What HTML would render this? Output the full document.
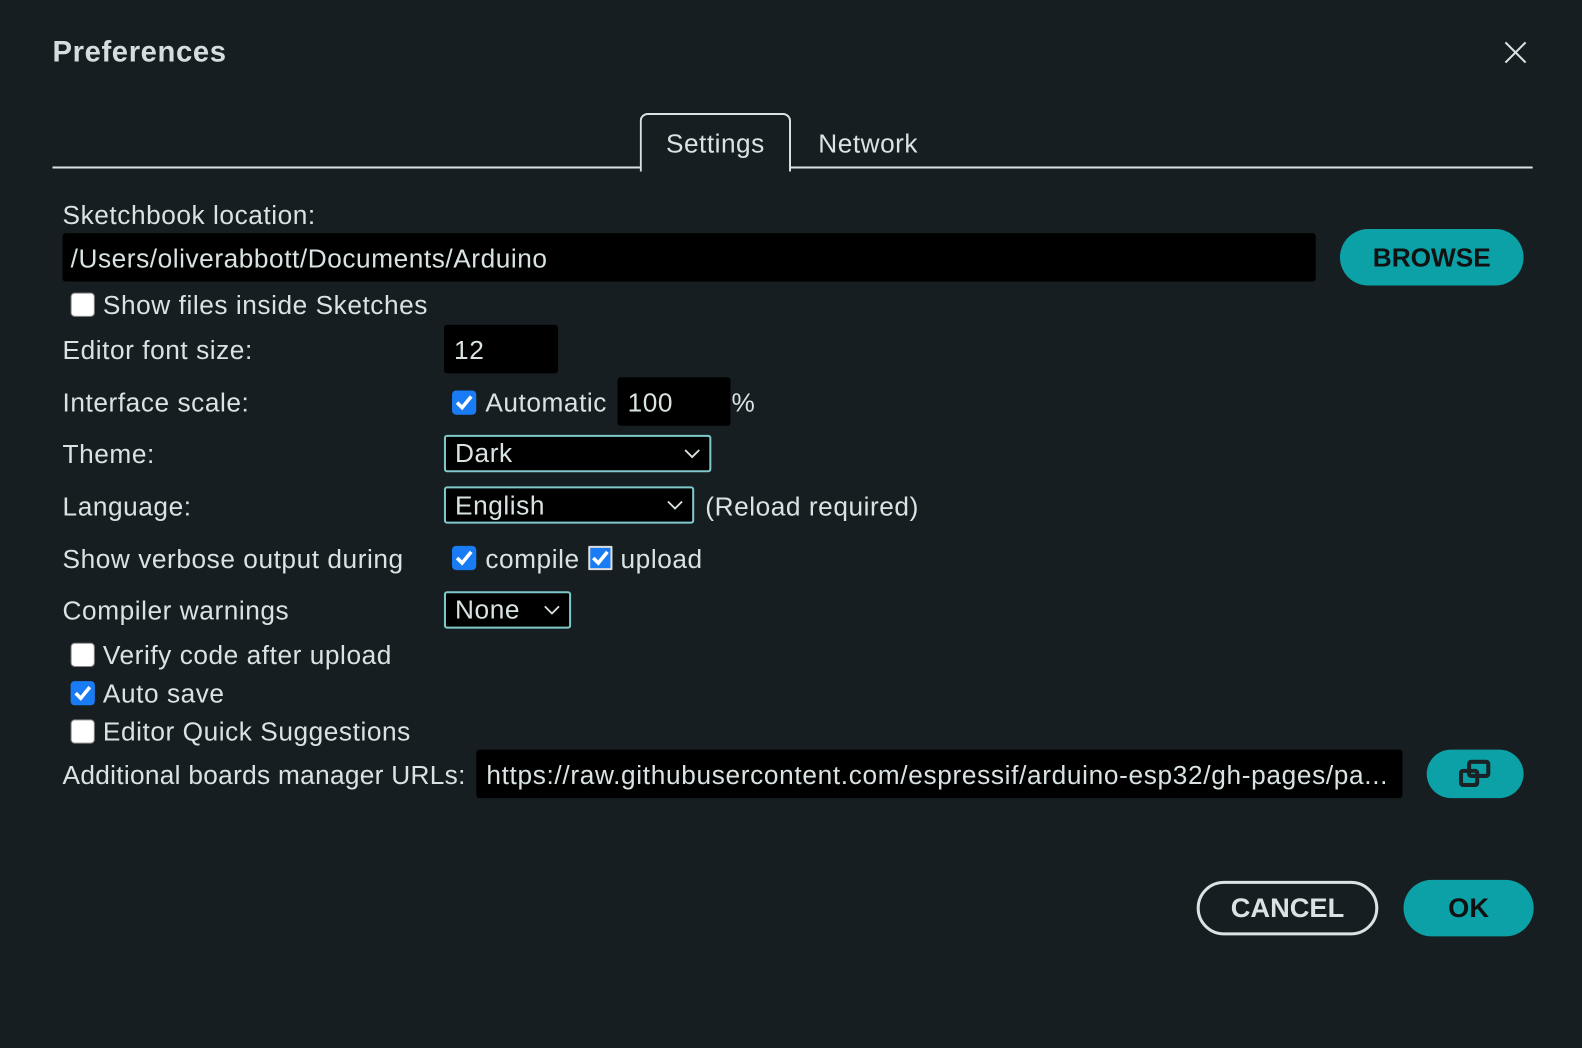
<!DOCTYPE html>
<html><head><style>
body{margin:0;width:1582px;height:1048px;background:#171e21;font-family:"Liberation Sans",sans-serif;color:#dae3e3;overflow:hidden}
#w{position:absolute;left:0;top:0;width:1568px;height:1039px;transform:scale(1.009);transform-origin:0 0}
.a{position:absolute;white-space:nowrap}
.t{font-size:26px;line-height:28px;letter-spacing:0.55px}
.in{position:absolute;background:#000;border-radius:3px}
.sel{position:absolute;background:#000;border:2px solid #7fc9cc;border-radius:3px;box-sizing:border-box}
.sel svg{position:absolute;right:8px;top:10px}
.cb{position:absolute;width:24px;height:24px;border-radius:4px;box-sizing:border-box}
.off{background:#fff;border:1px solid #888}
.on{background:#1a7cf5}
.btn{position:absolute;border-radius:30px;font-weight:bold;text-align:center}
</style></head><body><div id="w">
<div class="a" style="left:52px;top:34px;font-size:29px;line-height:36px;font-weight:bold;letter-spacing:0.6px;color:#d5dede">Preferences</div>
<svg class="a" style="left:1490px;top:40px" width="24" height="24"><path d="M2 2L22 22M22 2L2 22" stroke="#dae3e3" stroke-width="2"/></svg>
<div class="a" style="left:52px;top:165px;width:1467px;height:2px;background:#dae3e3"></div>
<div class="a" style="left:634px;top:112px;width:146px;height:56px;border:2px solid #dae3e3;border-bottom:none;border-radius:8px 8px 0 0;background:#171e21"></div>
<div class="a t" style="left:660px;top:128px;font-size:26px;letter-spacing:0.5px">Settings</div>
<div class="a t" style="left:811px;top:128px;font-size:26px;letter-spacing:0.5px">Network</div>

<div class="a t" style="left:62px;top:199px">Sketchbook location:</div>
<div class="in" style="left:62px;top:231px;width:1242px;height:48px"></div>
<div class="a t" style="left:70px;top:242px">/Users/oliverabbott/Documents/Arduino</div>
<div class="btn" style="left:1328px;top:227px;width:182px;height:56px;background:#0ca1a6;color:#111;font-size:26px;line-height:56px">BROWSE</div>

<div class="cb off" style="left:70px;top:290px"></div>
<div class="a t" style="left:102px;top:288px">Show files inside Sketches</div>

<div class="a t" style="left:62px;top:333px">Editor font size:</div>
<div class="in" style="left:440px;top:322px;width:113px;height:48px"></div>
<div class="a t" style="left:450px;top:333px">12</div>

<div class="a t" style="left:62px;top:385px">Interface scale:</div>
<div class="cb on" style="left:448px;top:387px"><svg width="24" height="24"><path d="M5 12l5 5 9-11" stroke="#fff" stroke-width="3.5" fill="none"/></svg></div>
<div class="a t" style="left:481px;top:385px">Automatic</div>
<div class="in" style="left:612px;top:374px;width:112px;height:48px"></div>
<div class="a t" style="left:622px;top:385px">100</div>
<div class="a t" style="left:725px;top:385px">%</div>

<div class="a t" style="left:62px;top:436px">Theme:</div>
<div class="sel" style="left:440px;top:431px;width:265px;height:37px"><svg width="18" height="12"><path d="M2 3l7 7 7-7" stroke="#dae3e3" stroke-width="1.8" fill="none"/></svg></div>
<div class="a t" style="left:451px;top:435px">Dark</div>

<div class="a t" style="left:62px;top:488px">Language:</div>
<div class="sel" style="left:440px;top:482px;width:248px;height:37px"><svg width="18" height="12"><path d="M2 3l7 7 7-7" stroke="#dae3e3" stroke-width="1.8" fill="none"/></svg></div>
<div class="a t" style="left:451px;top:487px">English</div>
<div class="a t" style="left:699px;top:488px">(Reload required)</div>

<div class="a t" style="left:62px;top:540px">Show verbose output during</div>
<div class="cb on" style="left:448px;top:541px"><svg width="24" height="24"><path d="M5 12l5 5 9-11" stroke="#fff" stroke-width="3.5" fill="none"/></svg></div>
<div class="a t" style="left:481px;top:540px">compile</div>
<div class="cb on" style="left:583px;top:541px;border:2px solid #ddd;border-radius:1px"><svg width="22" height="22" style="position:absolute;left:-1px;top:-1px"><path d="M4 11l5 5 9-11" stroke="#fff" stroke-width="3.5" fill="none"/></svg></div>
<div class="a t" style="left:615px;top:540px">upload</div>

<div class="a t" style="left:62px;top:591px">Compiler warnings</div>
<div class="sel" style="left:440px;top:586px;width:126px;height:37px"><svg width="18" height="12"><path d="M2 3l7 7 7-7" stroke="#dae3e3" stroke-width="1.8" fill="none"/></svg></div>
<div class="a t" style="left:451px;top:590px">None</div>

<div class="cb off" style="left:70px;top:637px"></div>
<div class="a t" style="left:102px;top:635px">Verify code after upload</div>
<div class="cb on" style="left:70px;top:675px"><svg width="24" height="24"><path d="M5 12l5 5 9-11" stroke="#fff" stroke-width="3.5" fill="none"/></svg></div>
<div class="a t" style="left:102px;top:673px">Auto save</div>
<div class="cb off" style="left:70px;top:713px"></div>
<div class="a t" style="left:102px;top:711px">Editor Quick Suggestions</div>

<div class="a t" style="left:62px;top:754px;letter-spacing:0.3px">Additional boards manager URLs:</div>
<div class="in" style="left:472px;top:743px;width:918px;height:48px"></div>
<div class="a t" style="left:482px;top:754px;letter-spacing:0.65px">https://raw.githubusercontent.com/espressif/arduino-esp32/gh-pages/pa...</div>
<div class="btn" style="left:1414px;top:743px;width:96px;height:48px;background:#0ca1a6"><svg width="34" height="30" style="margin-top:9px"><rect x="11" y="3" width="19" height="14" rx="2" fill="none" stroke="#1a2226" stroke-width="4"/><rect x="3" y="12" width="16" height="14" rx="2" fill="none" stroke="#1a2226" stroke-width="4"/></svg></div>

<div class="btn" style="left:1186px;top:873px;width:180px;height:54px;border:3px solid #dae3e3;box-sizing:border-box;color:#dae3e3;font-size:27px;line-height:48px">CANCEL</div>
<div class="btn" style="left:1391px;top:872px;width:129px;height:56px;background:#0ca1a6;color:#111;font-size:27px;line-height:56px">OK</div>
</div></body></html>
